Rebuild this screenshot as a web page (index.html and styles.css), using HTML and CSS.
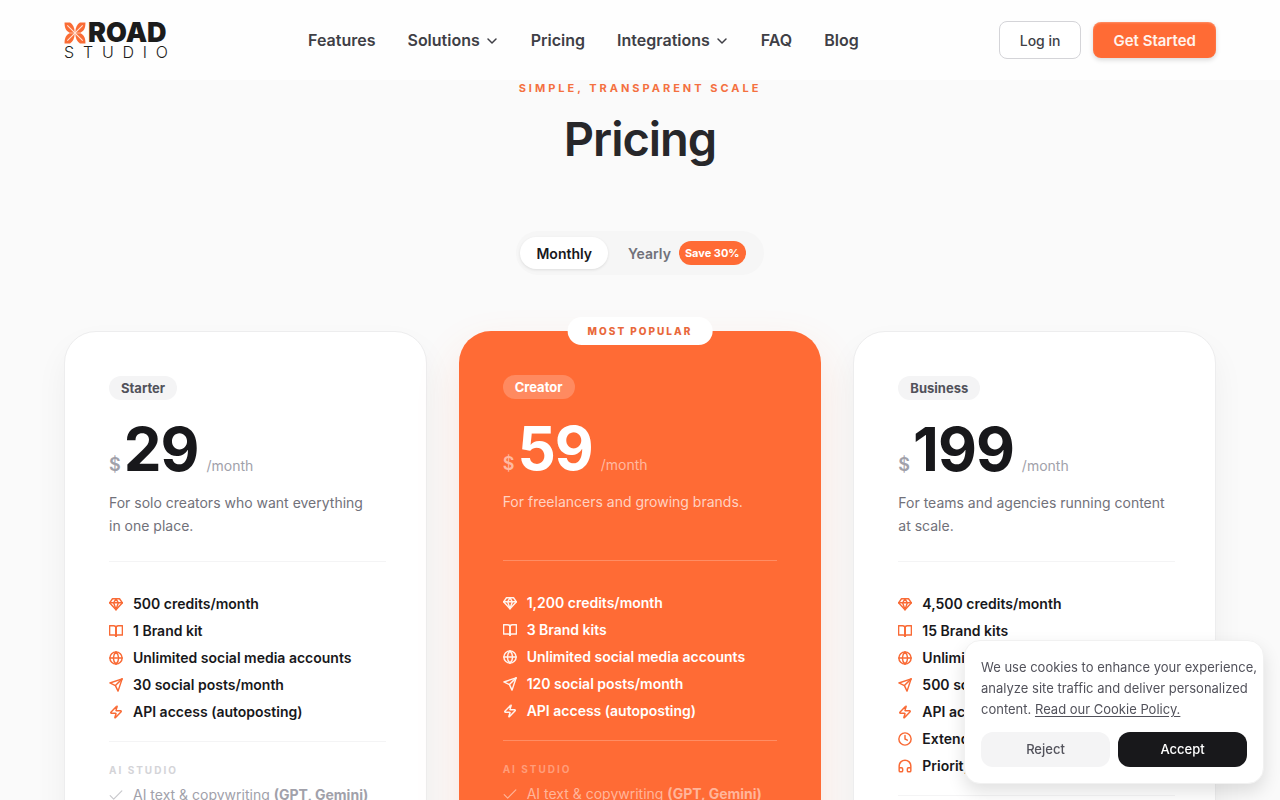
FILE: index.html
```html
<!DOCTYPE html>
<html lang="en">
<head>
<meta charset="utf-8">
<meta name="viewport" content="width=device-width, initial-scale=1">
<title>Pricing – XROAD Studio</title>
<link rel="stylesheet" href="styles.css">
</head>
<body>
<svg class="sprite" aria-hidden="true">
  <symbol id="chevron" viewBox="0 0 24 24"><path d="m4 8 8 8 8-8"/></symbol>
  <symbol id="gem" viewBox="0 0 24 24"><path d="M6 3h12l5 7-11 12L1 10Z"/><path d="M1 10h22"/><path d="M12 3 8 10l4 12 4-12-4-7"/></symbol>
  <symbol id="book" viewBox="0 0 24 24"><path d="M12 6v15"/><path d="M1 3h7a4 4 0 0 1 4 4v14a3 3 0 0 0-3-2H1z"/><path d="M23 3h-7a4 4 0 0 0-4 4v14a3 3 0 0 1 3-2h8z"/></symbol>
  <symbol id="globe" viewBox="0 0 24 24"><circle cx="12" cy="12" r="10.5"/><path d="M1.500 12h21"/><path d="M12 1.500c6 6 6 15 0 21c-6-6-6-15 0-21"/></symbol>
  <symbol id="send" viewBox="0 0 24 24"><path d="M22.500 1.500 15.500 22.500 11 13 1.500 8.500z"/><path d="M22.500 1.500 11 13"/></symbol>
  <symbol id="bolt" viewBox="0 0 24 24"><path d="M4 14a1 1 0 0 1-.78-1.630l9.900-10.200a.5.5 0 0 1 .86.460l-1.920 6.020A1 1 0 0 0 13 10h7a1 1 0 0 1 .78 1.630l-9.900 10.200a.5.5 0 0 1-.86-.460l1.920-6.020A1 1 0 0 0 11 14z"/></symbol>
  <symbol id="clock" viewBox="0 0 24 24"><circle cx="12" cy="12" r="10.500"/><path d="M12 6v6l4 2"/></symbol>
  <symbol id="headphones" viewBox="0 0 24 24"><path d="M2 15h4a2 2 0 0 1 2 2v3a2 2 0 0 1-2 2H4a2 2 0 0 1-2-2v-8a10 10 0 0 1 20 0v8a2 2 0 0 1-2 2h-2a2 2 0 0 1-2-2v-3a2 2 0 0 1 2-2h4"/></symbol>
  <symbol id="check" viewBox="0 0 24 24"><path d="M22 5 8 19l-6-6"/></symbol>
</svg>

<header class="header">
  <a class="logo" href="#" aria-label="XROAD Studio">
    <span class="logo-top">
      <svg class="logo-mark" viewBox="0 0 20 20" aria-hidden="true">
        <path class="petal" d="M9.700 9.700H5C1.500 8 .5 5 .5.500H5.500C8 2 9.700 5 9.700 9.700Z"/>
        <path class="petal" d="M9.700 9.700H5C1.500 8 .5 5 .5.500H5.500C8 2 9.700 5 9.700 9.700Z" transform="matrix(-1 0 0 1 20 0)"/>
        <path class="petal" d="M9.700 9.700H5C1.500 8 .5 5 .5.500H5.500C8 2 9.700 5 9.700 9.700Z" transform="matrix(1 0 0 -1 0 20)"/>
        <path class="petal" d="M9.700 9.700H5C1.500 8 .5 5 .5.500H5.500C8 2 9.700 5 9.700 9.700Z" transform="rotate(180 10 10)"/>
        <path class="vein" d="m3 3 14 14m0-14-14 14"/>
      </svg>
      <span>ROAD</span>
    </span>
    <span class="logo-bottom"><span>S</span><span>T</span><span>U</span><span>D</span><span>I</span><span>O</span></span>
  </a>
  <nav class="nav" aria-label="Main">
    <a href="#">Features</a>
    <button type="button">Solutions<svg class="icon"><use href="#chevron"/></svg></button>
    <a href="#">Pricing</a>
    <button type="button">Integrations<svg class="icon"><use href="#chevron"/></svg></button>
    <a href="#">FAQ</a>
    <a href="#">Blog</a>
  </nav>
  <div class="actions">
    <button class="btn btn-outline" type="button">Log in</button>
    <button class="btn btn-primary" type="button">Get Started</button>
  </div>
</header>

<main class="page">
  <p class="eyebrow">Simple, transparent scale</p>
  <h1>Pricing</h1>
  <div class="toggle" role="group" aria-label="Billing period">
    <button class="period active" type="button" aria-pressed="true">Monthly</button>
    <button class="period" type="button" aria-pressed="false">Yearly<span class="save">Save 30%</span></button>
  </div>

  <div class="plans">
    <article class="card">
      <h2 class="plan">Starter</h2>
      <p class="price"><span class="currency">$</span><span class="amount">29</span><span class="per">/month</span></p>
      <p class="desc">For solo creators who want everything in one place.</p>
      <ul class="features">
        <li><svg class="icon"><use href="#gem"/></svg>500 credits/month</li>
        <li><svg class="icon"><use href="#book"/></svg>1 Brand kit</li>
        <li><svg class="icon"><use href="#globe"/></svg>Unlimited social media accounts</li>
        <li><svg class="icon"><use href="#send"/></svg>30 social posts/month</li>
        <li><svg class="icon"><use href="#bolt"/></svg>API access (autoposting)</li>
      </ul>
      <h3 class="group">AI Studio</h3>
      <ul class="details">
        <li><svg class="icon"><use href="#check"/></svg><span>AI text &amp; copywriting <strong>(GPT, Gemini)</strong></span></li>
      </ul>
    </article>

    <article class="card featured">
      <span class="popular">Most popular</span>
      <h2 class="plan">Creator</h2>
      <p class="price"><span class="currency">$</span><span class="amount">59</span><span class="per">/month</span></p>
      <p class="desc">For freelancers and growing brands.</p>
      <ul class="features">
        <li><svg class="icon"><use href="#gem"/></svg>1,200 credits/month</li>
        <li><svg class="icon"><use href="#book"/></svg>3 Brand kits</li>
        <li><svg class="icon"><use href="#globe"/></svg>Unlimited social media accounts</li>
        <li><svg class="icon"><use href="#send"/></svg>120 social posts/month</li>
        <li><svg class="icon"><use href="#bolt"/></svg>API access (autoposting)</li>
      </ul>
      <h3 class="group">AI Studio</h3>
      <ul class="details">
        <li><svg class="icon"><use href="#check"/></svg><span>AI text &amp; copywriting <strong>(GPT, Gemini)</strong></span></li>
      </ul>
    </article>

    <article class="card">
      <h2 class="plan">Business</h2>
      <p class="price"><span class="currency">$</span><span class="amount">199</span><span class="per">/month</span></p>
      <p class="desc">For teams and agencies running content at scale.</p>
      <ul class="features">
        <li><svg class="icon"><use href="#gem"/></svg>4,500 credits/month</li>
        <li><svg class="icon"><use href="#book"/></svg>15 Brand kits</li>
        <li><svg class="icon"><use href="#globe"/></svg>Unlimited social media accounts</li>
        <li><svg class="icon"><use href="#send"/></svg>500 social posts/month</li>
        <li><svg class="icon"><use href="#bolt"/></svg>API access (autoposting)</li>
        <li><svg class="icon"><use href="#clock"/></svg>Extended history</li>
        <li><svg class="icon"><use href="#headphones"/></svg>Priority support</li>
      </ul>
    </article>
  </div>
</main>

<aside class="cookies" aria-label="Cookie notice">
  <p>We use cookies to enhance your experience, analyze site traffic and deliver personalized content. <a href="#">Read our Cookie Policy.</a></p>
  <div class="cookie-actions">
    <button class="reject" type="button">Reject</button>
    <button class="accept" type="button">Accept</button>
  </div>
</aside>
</body>
</html>
```

FILE: styles.css
```css
* { box-sizing: border-box; margin: 0; padding: 0; }
body {
  height: 100vh;
  display: flex;
  flex-direction: column;
  overflow: hidden;
  background: #fafafa;
  color: #18181b;
  font-family: Inter, "Liberation Sans", sans-serif;
  font-size: 14px;
}
button { font: inherit; color: inherit; border: 0; background: none; cursor: pointer; }
a { color: inherit; text-decoration: none; }
ul { list-style: none; }
.sprite { position: absolute; width: 0; height: 0; }
.icon {
  flex: none;
  width: 14px;
  height: 14px;
  fill: none;
  stroke: currentColor;
  stroke-width: 2;
  stroke-linecap: round;
  stroke-linejoin: round;
}

/* Header */
.header {
  flex: none;
  display: flex;
  align-items: center;
  justify-content: space-between;
  height: 80px;
  padding: 0 64px;
  background: #fefefe;
}
.logo { width: 104px; padding-top: 2px; color: #1c1c1c; }
.logo-top { display: flex; align-items: center; gap: 2px; font-size: 27px; line-height: 22px; font-weight: 900; }
.logo-mark { flex: none; width: 22px; height: 22px; }
.petal { fill: #fa6c35; }
.vein { stroke: #ffe3d8; stroke-width: 1; }
.logo-bottom { display: flex; justify-content: space-between; font-size: 16px; line-height: 16px; font-weight: 300; }
.nav { display: flex; align-items: center; gap: 32px; font-size: 16px; line-height: 20px; font-weight: 600; color: #3f3f46; }
.nav button { display: flex; align-items: center; gap: 6px; }
.nav .icon { width: 12px; height: 12px; margin: 2px 1px 0 0; stroke-width: 3; }
.actions { display: flex; align-items: center; gap: 12px; font-weight: 600; }
.btn { border-radius: 8px; padding: 0 20px; height: 36px; color: #fff3ed; }
.btn-outline { height: 38px; border: 1px solid #d4d4d8; background: #fff; color: #3f3f46; font-weight: 500; }
.btn-primary { background: #ff6b35; font-size: 15px; box-shadow: inset 0 1px 2px #ffffff40, 0 2px 5px #00000026; }

/* Intro */
.page { flex: 1; overflow-y: auto; scrollbar-width: none; padding: 0 64px 64px; display: flex; flex-direction: column; align-items: center; }
.eyebrow { color: #f4703f; font-size: 11px; line-height: 16px; font-weight: 700; letter-spacing: 3px; text-transform: uppercase; }
h1 { margin-top: 15px; font-size: 47px; line-height: 56px; font-weight: 600; letter-spacing: -1px; color: #27272a; }
.toggle { display: flex; margin-top: 64px; padding: 6px 4px; border-radius: 22px; background: #f6f6f6; font-weight: 600; }
.period { display: flex; align-items: center; gap: 8px; height: 32px; padding: 0 16px; border-radius: 16px; color: #71717a; }
.period:last-child { padding: 0 14px 0 20px; }
.period.active { background: #fff; color: #18181b; box-shadow: 0 1px 3px #0000001a; }
.save { padding: 0 6px; border-radius: 12px; background: #ff6b35; color: #fff; font-size: 11px; line-height: 24px; font-weight: 700; }

/* Plans */
.plans { width: 100%; display: grid; grid-template-columns: repeat(3, 1fr); gap: 32px; margin-top: 56px; }
.card {
  position: relative;
  padding: 44px 40px 44px 44px;
  border: 1px solid #ededee;
  border-radius: 32px;
  background: #fff;
  box-shadow: 0 16px 32px #0000000d;
}
.plan {
  width: fit-content;
  padding: 0 12px;
  border-radius: 12px;
  background: #f4f4f5;
  color: #52525b;
  font-size: 13px;
  line-height: 24px;
  font-weight: 700;
}
.price { display: flex; align-items: baseline; margin-top: 19px; line-height: 60px; }
.currency { color: #a1a1aa; font-size: 18px; line-height: 20px; font-weight: 600; }
.amount { margin-left: 3px; font-size: 60px; font-weight: 700; letter-spacing: -1px; }
.per { margin-left: 8px; color: #a1a1aa; line-height: 20px; }
.desc { min-height: 46px; margin-top: 12px; padding-right: 8px; color: #71717a; line-height: 23px; }
.features {
  display: grid;
  gap: 6px;
  margin-top: 24px;
  padding: 31px 0 19px;
  border-top: 1px solid #f4f4f5;
  border-bottom: 1px solid #f4f4f5;
  line-height: 21px;
  font-weight: 600;
}
.features li, .details li { display: flex; align-items: center; gap: 10px; }
.features .icon { color: #f96a35; stroke-width: 2.5; }
.group { margin-top: 20px; color: #d4d4d8; font-size: 10px; line-height: 16px; font-weight: 700; letter-spacing: 2px; text-transform: uppercase; }
.details { margin-top: 6px; color: #a1a1aa; line-height: 21px; }
.details .icon { color: #c8c8cc; }

.featured { padding: 44px; border: 0; background: #ff6b35; color: #fff; box-shadow: 0 20px 44px #ff6b3526; }
.popular {
  position: absolute;
  top: -14px;
  left: 50%;
  transform: translateX(-50%);
  padding: 0 20px;
  border-radius: 14px;
  background: #fff;
  color: #e9683b;
  font-size: 10px;
  line-height: 28px;
  font-weight: 800;
  letter-spacing: 2px;
  text-transform: uppercase;
  white-space: nowrap;
}
.featured .plan { background: #ff8a60; color: #fff; }
.featured .currency, .featured .per { color: #ffb9a0; }
.featured .desc { color: #ffd2c2; }
.featured .features { border-color: #ff8d64; }
.featured .features .icon { color: #fff3ed; }
.featured .group { color: #ff9d7a; }
.featured .details { color: #ffb59a; }
.featured .details .icon { color: #ffb59a; }

/* Cookie notice */
.cookies {
  position: fixed;
  right: 16px;
  bottom: 16px;
  width: 300px;
  padding: 16px;
  border: 1px solid #f1f1f1;
  border-radius: 16px;
  background: #fff;
  box-shadow: 0 8px 18px #0000001f;
  color: #52525b;
  font-size: 13px;
  line-height: 21px;
}
.cookies p { margin-right: -10px; }
.cookies a { text-decoration: underline; text-underline-offset: 2px; }
.cookie-actions { display: grid; grid-template-columns: 1fr 1fr; gap: 8px; margin-top: 12px; font-weight: 500; }
.cookie-actions button { height: 35px; border-radius: 12px; }
.reject { background: #f4f4f5; }
.accept { background: #18181b; color: #fff; }
```
